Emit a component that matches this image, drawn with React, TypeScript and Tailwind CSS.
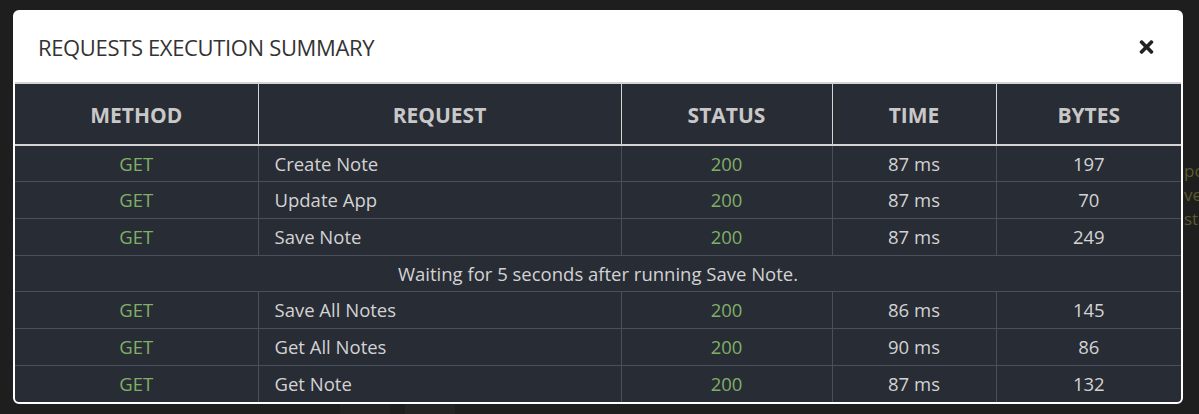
import { FaTimes } from 'react-icons/fa';

type Row = { method: string; name: string; status: number; time: string; bytes: number };

const before: Row[] = [
  { method: 'GET', name: 'Create Note', status: 200, time: '87 ms', bytes: 197 },
  { method: 'GET', name: 'Update App', status: 200, time: '87 ms', bytes: 70 },
  { method: 'GET', name: 'Save Note', status: 200, time: '87 ms', bytes: 249 },
];

const after: Row[] = [
  { method: 'GET', name: 'Save All Notes', status: 200, time: '86 ms', bytes: 145 },
  { method: 'GET', name: 'Get All Notes', status: 200, time: '90 ms', bytes: 86 },
  { method: 'GET', name: 'Get Note', status: 200, time: '87 ms', bytes: 132 },
];

function DataRow({ row }: { row: Row }) {
  return (
    <tr className="h-[36.7px] border-t border-[#4a4f5b]">
      <td className="text-center text-[#80b066]">{row.method}</td>
      <td className="border-l border-[#4a4f5b] pl-4">{row.name}</td>
      <td className="border-l border-[#4a4f5b] text-center text-[#80b066]">{row.status}</td>
      <td className="border-l border-[#4a4f5b] text-center">{row.time}</td>
      <td className="border-l border-[#4a4f5b] text-center">{row.bytes}</td>
    </tr>
  );
}

export default function App() {
  return (
    <div
      className="relative h-[414px] w-[1199px] overflow-hidden bg-[#1e1e1e]"
      style={{ fontFamily: '"Open Sans", "Noto Sans", sans-serif' }}
    >
      {/* page content behind the modal */}
      <div className="absolute left-[1184px] top-[159px] flex flex-col text-[17px] leading-[24px] text-[#5c5a2c]">
        <span>po</span>
        <span>ve</span>
        <span>st</span>
      </div>
      <div className="absolute left-[340px] top-[402px] h-[12px] w-[50px] bg-[#242424]" />
      <div className="absolute left-[405px] top-[402px] h-[12px] w-[50px] bg-[#242424]" />

      {/* modal */}
      <div className="relative ml-[13px] mt-[10px] w-[1170px] overflow-hidden rounded-[6px] border-2 border-white bg-white">
        <div className="flex h-[70px] items-center justify-between pl-[23px] pr-[27px]">
          <h2 className="text-[22px] font-normal tracking-[-0.35px] text-[#333]">REQUESTS EXECUTION SUMMARY</h2>
          <FaTimes className="h-[20px] w-[15px] text-[#222]" />
        </div>
        <table className="w-full table-fixed border-collapse bg-[#282c35] text-[18.5px] text-[#d3d3d3]">
          <colgroup>
            <col className="w-[243px]" />
            <col className="w-[363px]" />
            <col className="w-[211px]" />
            <col className="w-[164px]" />
            <col className="w-[185px]" />
          </colgroup>
          <thead>
            <tr className="h-[62px] border-t-2 border-b-2 border-[#d4d4d4] text-[21px] text-[#c8c8c8]">
              <th className="pt-[3px] text-center font-bold">METHOD</th>
              <th className="border-l border-[#d4d4d4] pt-[3px] text-center font-bold">REQUEST</th>
              <th className="border-l border-[#d4d4d4] pt-[3px] text-center font-bold">STATUS</th>
              <th className="border-l border-[#d4d4d4] pt-[3px] text-center font-bold">TIME</th>
              <th className="border-l border-[#d4d4d4] pt-[3px] text-center font-bold">BYTES</th>
            </tr>
          </thead>
          <tbody>
            {before.map((r) => (
              <DataRow key={r.name} row={r} />
            ))}
            <tr className="h-[36.7px] border-t border-[#4a4f5b]">
              <td colSpan={5} className="text-center">
                Waiting for 5 seconds after running Save Note.
              </td>
            </tr>
            {after.map((r) => (
              <DataRow key={r.name} row={r} />
            ))}
          </tbody>
        </table>
      </div>
    </div>
  );
}
